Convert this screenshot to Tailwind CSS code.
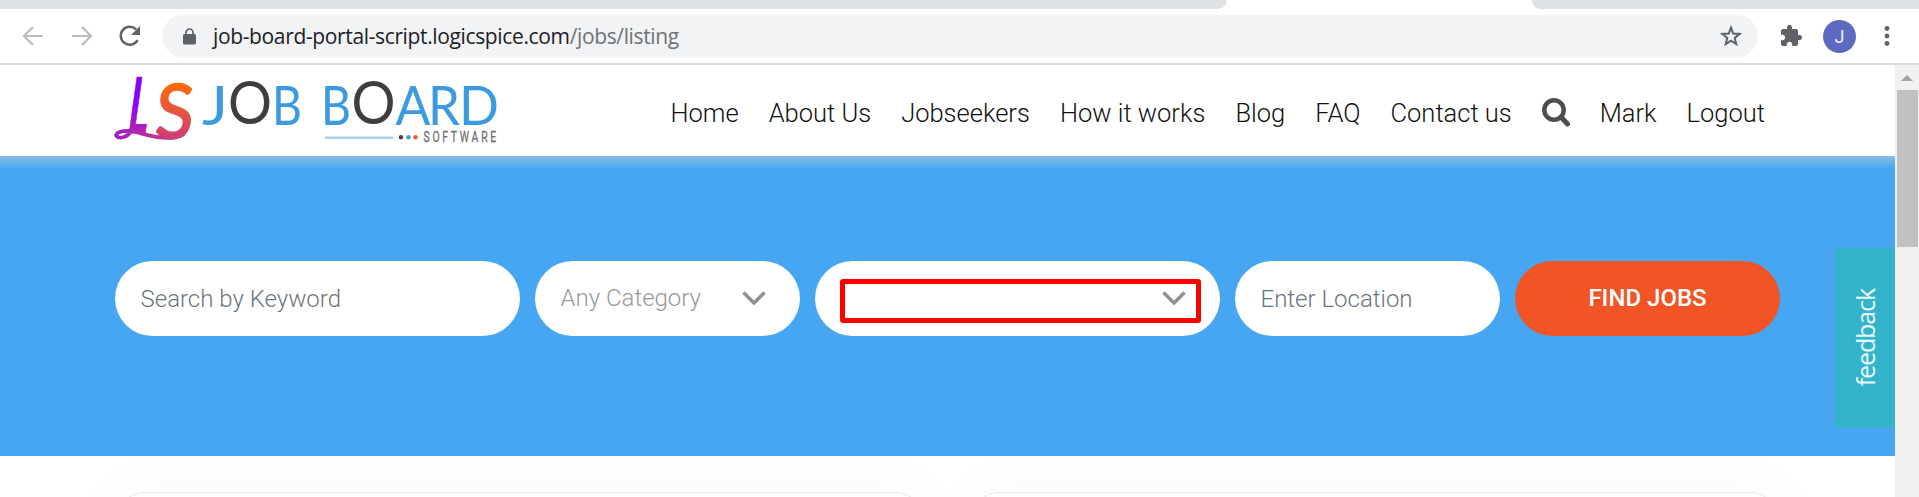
<!DOCTYPE html>
<html lang="en">
<head>
<meta charset="utf-8">
<title>Job Board Software</title>
<script src="https://cdn.jsdelivr.net/npm/@tailwindcss/browser@4"></script>
</head>
<body class="w-[1919px] h-[497px] overflow-hidden bg-white font-[Roboto,sans-serif]">
<div class="flex flex-col h-[497px]">
  <!-- browser tab strip -->
  <div class="flex justify-between h-[9px] shrink-0 bg-white">
    <div class="w-[1227px] bg-[#dee1e6] rounded-br-[9px]"></div>
    <div class="w-[387px] bg-[#dee1e6] rounded-bl-[9px]"></div>
  </div>
  <!-- toolbar -->
  <div class="flex items-center h-[56px] shrink-0 border-b-2 border-[#dadce0] pl-[22px] pr-[20px]">
    <svg class="w-[22px] h-[26px] shrink-0" viewBox="0 0 22 26" fill="none" stroke="#babcbe" stroke-width="2.2"><path d="M21 13H2.5M11 4L2 13l9 9"/></svg>
    <svg class="w-[22px] h-[26px] shrink-0 ml-[27px]" viewBox="0 0 22 26" fill="none" stroke="#babcbe" stroke-width="2.2"><path d="M1 13h18.5M11 4l9 9-9 9"/></svg>
    <svg class="w-[22px] h-[22px] shrink-0 ml-[26px]" viewBox="0 0 22 22"><path d="M18.6 15.2A9 9 0 1 1 17.2 4.4" fill="none" stroke="#5f6368" stroke-width="2.5"/><path d="M21 1v9h-9z" fill="#5f6368"/></svg>
    <div class="flex items-center h-[42px] w-[1596px] shrink-0 ml-[21px] rounded-full bg-[#f1f3f4] pl-[21px] pr-[16px]">
      <svg class="w-[13px] h-[17px]" viewBox="0 0 13 17"><path d="M3 7V4.5a3.5 3.5 0 0 1 7 0V7" fill="none" stroke="#5f6368" stroke-width="1.7"/><rect x="0" y="6" width="13" height="10.5" rx="1.5" fill="#5f6368"/></svg>
      <div class="ml-[17px] text-[21px] leading-[30px] tracking-[-0.36px] text-[#202124] whitespace-nowrap font-['Open_Sans',sans-serif]">job-board-portal-script.logicspice.com<span class="text-[#6f7276]">/jobs/listing</span></div>
      <svg class="w-[22px] h-[22px] ml-auto" viewBox="0 0 22 22" fill="none" stroke="#5f6368" stroke-width="2"><path d="M11 2.600l2.200 5.900 6.400.4-4.900 4 1.600 6.200L11 15.700l-5.300 3.400 1.600-6.200-4.900-4 6.400-.4z"/></svg>
    </div>
    <svg class="w-[22px] h-[22px] shrink-0 ml-[22px]" viewBox="1 1 22 22" fill="#5f6368"><path d="M20.5 11H19V7c0-1.1-.9-2-2-2h-4V3.500a2.500 2.500 0 0 0-5 0V5H4c-1.100 0-2 .9-2 2v3.800h1.500c1.500 0 2.700 1.200 2.700 2.700s-1.200 2.700-2.700 2.700H2V20c0 1.100.9 2 2 2h3.800v-1.500c0-1.500 1.200-2.700 2.700-2.700s2.700 1.200 2.700 2.700V22H17c1.100 0 2-.9 2-2v-4h1.500a2.500 2.500 0 0 0 0-5z"/></svg>
    <div class="flex items-center justify-center size-[33px] shrink-0 ml-[21px] rounded-full bg-[#5c6bc0] text-white/90 text-[18px]">J</div>
    <svg class="w-[6px] h-[20px] shrink-0 ml-[28px]" viewBox="0 0 6 20" fill="#5f6368"><circle cx="3" cy="2.500" r="2.400"/><circle cx="3" cy="10" r="2.400"/><circle cx="3" cy="17.500" r="2.400"/></svg>
  </div>

  <div class="flex grow min-h-0">
    <!-- page -->
    <div class="relative w-[1895px] shrink-0 flex flex-col overflow-hidden">
      <header class="flex items-center h-[91px] shrink-0 pl-[115px] pr-[130px]">
        <svg class="w-[385px] h-[91px] shrink-0 overflow-visible" viewBox="115 65 385 91" font-family="Lato, sans-serif">
          <defs>
            <linearGradient id="gl" gradientUnits="userSpaceOnUse" x1="0" y1="-55" x2="0" y2="0"><stop offset="0.4" stop-color="#8a00ff"/><stop offset="1" stop-color="#b423b0"/></linearGradient>
            <linearGradient id="gs" gradientUnits="userSpaceOnUse" x1="0" y1="-54" x2="0" y2="2"><stop offset="0" stop-color="#ff6a0c"/><stop offset="1" stop-color="#cf3b78"/></linearGradient>
            <linearGradient id="gw" gradientUnits="userSpaceOnUse" x1="115" y1="0" x2="190" y2="0"><stop offset="0" stop-color="#a01cd0"/><stop offset="1" stop-color="#d54763"/></linearGradient>
          </defs>
          <text transform="translate(126 133) skewX(-8)" font-size="77" font-weight="700" fill="url(#gl)" stroke="url(#gl)" textLength="20" lengthAdjust="spacingAndGlyphs">L</text>
          <text transform="translate(154 138) skewX(-4)" font-size="75" font-weight="400" fill="url(#gs)" stroke="url(#gs)" stroke-width="2" textLength="38" lengthAdjust="spacingAndGlyphs">S</text>
          <path d="M131 131C122 130 115 133 116.500 136C119 139 127 138 131 131C146 134 168 143 184 134" fill="none" stroke="url(#gw)" stroke-width="3.800"/>
          <g fill="#3b9ae0" font-size="54">
            <text x="202" y="124.500" textLength="26" lengthAdjust="spacingAndGlyphs">J</text>
            <text x="272" y="124.500" textLength="30" lengthAdjust="spacingAndGlyphs">B</text>
            <text x="321" y="124.500" textLength="30" lengthAdjust="spacingAndGlyphs">B</text>
            <text x="395.500" y="124.500" textLength="35" lengthAdjust="spacingAndGlyphs">A</text>
            <text x="428" y="124.500" textLength="32" lengthAdjust="spacingAndGlyphs">R</text>
            <text x="459" y="124.500" textLength="40" lengthAdjust="spacingAndGlyphs">D</text>
          </g>
          <g fill="#3e3e40" font-size="60">
            <text x="228" y="124" textLength="44" lengthAdjust="spacingAndGlyphs">O</text>
            <text x="351.500" y="124" textLength="44" lengthAdjust="spacingAndGlyphs">O</text>
          </g>
          <rect x="325" y="136.500" width="68" height="2.500" fill="#a6d3f4"/>
          <circle cx="401" cy="137.300" r="2.200" fill="#444"/><circle cx="408.500" cy="137.300" r="2.200" fill="#3b9ae0"/><circle cx="415.500" cy="137.300" r="2.200" fill="#f15a24"/>
          <g transform="translate(423.500 142) scale(.72 1)"><text font-family="Roboto, sans-serif" font-size="14.500" fill="#707070" stroke="#707070" stroke-width=".3" textLength="101">SOFTWARE</text></g>
        </svg>
        <nav class="flex items-center ml-auto gap-[30px] h-[30px] mt-[4px] text-[25.5px] leading-[30px] font-light text-[#111] whitespace-nowrap">
          <a>Home</a><a>About Us</a><a>Jobseekers</a><a>How it works</a><a>Blog</a><a>FAQ</a><a>Contact us</a>
          <svg class="w-[28px] h-[29px]" viewBox="0 0 28 29" fill="none" stroke="#4c4f4b" stroke-width="4.500"><circle cx="12" cy="12" r="9.700"/><path d="M19 19l6.500 7" stroke-width="5" stroke-linecap="round"/></svg>
          <a>Mark</a><a>Logout</a>
        </nav>
      </header>
      <section class="h-[300px] shrink-0 bg-[#46a6f1] bg-[linear-gradient(#85bde6,#46a6f1_14px)] pt-[105px] pl-[115px]">
        <div class="flex gap-[15px] h-[75px] text-[24px] font-light leading-[30px] whitespace-nowrap">
          <div class="flex items-center w-[405px] rounded-full bg-white pl-[25.5px] text-[#6c757d]">Search by Keyword</div>
          <div class="flex items-center justify-between w-[265px] rounded-full bg-white pl-[25.5px] pr-[34px] text-[#999]"><span class="pb-px">Any Category</span>
            <svg class="w-[24px] h-[15px]" viewBox="0 0 24 15" fill="none" stroke="#919191" stroke-width="3.500"><path d="M1.500 1.500L12 12 22.500 1.500"/></svg></div>
          <div class="flex w-[405px] rounded-full bg-white pt-[18px] pl-[25px]">
            <div class="flex items-center justify-end w-[361px] h-[44px] border-[5px] border-[#fe0000] rounded-[3px] pr-[10px] pb-[5px]">
              <svg class="w-[24px] h-[15px]" viewBox="0 0 24 15" fill="none" stroke="#919191" stroke-width="3.500"><path d="M1.500 1.500L12 12 22.500 1.500"/></svg></div>
          </div>
          <div class="flex items-center w-[265px] rounded-full bg-white pl-[25.5px] text-[#6c757d]">Enter Location</div>
          <div class="flex items-center justify-center w-[265px] rounded-full bg-[#f15425] text-white font-medium pb-[2px]">FIND JOBS</div>
        </div>
      </section>
      <!-- job cards -->
      <div class="flex gap-[45px] pt-[36px] pl-[115px]">
        <div class="w-[810px] h-[300px] shrink-0 rounded-[30px] border border-[#e8e8e8] bg-white shadow-[0_0_75px_rgba(0,0,0,0.03)]"></div>
        <div class="w-[810px] h-[300px] shrink-0 rounded-[30px] border border-[#e8e8e8] bg-white shadow-[0_0_75px_rgba(0,0,0,0.03)]"></div>
      </div>
      <!-- feedback tab pinned to the page edge -->
      <div class="absolute right-0 top-[183px] w-[60px] h-[180px] bg-[#33b4cc] flex items-center justify-center">
        <span class="[writing-mode:vertical-rl] rotate-180 text-white/90 text-[25px] tracking-[-1.1px] leading-[30px] font-['Open_Sans',sans-serif]">feedback</span>
      </div>
    </div>
    <!-- scrollbar -->
    <div class="w-[24px] bg-[#f0f0f0] flex flex-col items-center pt-[10px]">
      <svg class="w-[12px] h-[6px]" viewBox="0 0 12 6"><path d="M0 6L6 0l6 6z" fill="#a3a3a3"/></svg>
      <div class="w-[21px] h-[157px] mt-[9px] bg-[#c1c1c1]"></div>
    </div>
  </div>
</div>
</body>
</html>
